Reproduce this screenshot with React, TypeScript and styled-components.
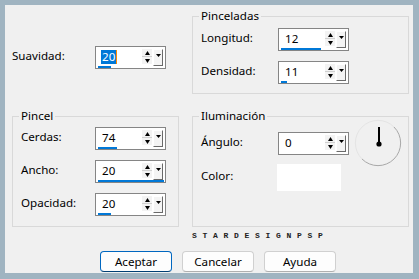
import React from 'react';
import styled, { createGlobalStyle, css } from 'styled-components';

const GlobalStyle = createGlobalStyle`
    html, body {
        margin: 0;
        padding: 0;
        background: #a0b4c1;
    }
    body {
        font-family: "Noto Sans", "Liberation Sans", sans-serif;
        font-size: 11.6px;
        color: #000;
    }
`;

const Frame = styled.div`
    width: 419px;
    height: 279px;
    box-sizing: border-box;
    padding: 5px 6px 6px 5px;
    background: #a0b4c1;
`;

const Dialog = styled.div`
    width: 408px;
    height: 268px;
    box-sizing: border-box;
    padding: 4px 0 0 7px;
    background: #f0f0f0;
    display: flex;
    flex-direction: column;
`;

const Groups = styled.div`
    display: grid;
    grid-template-columns: 167px 217px;
    grid-template-rows: 85px 118px;
    column-gap: 13px;
    row-gap: 15px;
`;

const Loose = styled.div`
    padding-top: 37px;
`;

const Group = styled.fieldset<{ $tight?: boolean }>`
    margin: 0;
    min-width: 0;
    height: 100%;
    box-sizing: border-box;
    padding: 0 ${p => (p.$tight ? 4 : 8)}px 0 8px;
    border: 1px solid #d9d9d9;
`;

const Legend = styled.legend`
    padding: 0 2px;
    margin-left: -2px;
    font-size: 11.6px;
    line-height: 14px;
`;

const Rows = styled.div<{ $top: number; $gap: number }>`
    display: flex;
    flex-direction: column;
    gap: ${p => p.$gap}px;
    padding-top: ${p => p.$top}px;
`;

const Row = styled.div`
    display: flex;
    align-items: center;
`;

const Label = styled.span<{ $w: number }>`
    width: ${p => p.$w}px;
    flex: none;
    line-height: 14px;
    margin-top: -3px;
`;

const Spin = styled.div`
    width: 71px;
    height: 23px;
    box-sizing: border-box;
    border: 1px solid #858585;
    background: #fff;
    padding: 1px 2px 1px 1px;
    display: flex;
    flex-direction: column;
`;

const SpinTop = styled.div`
    display: flex;
    height: 18px;
`;

const Value = styled.div`
    flex: 1;
    padding-left: 4px;
    display: flex;
    align-items: center;
`;

const ValueText = styled.span<{ $selected?: boolean }>`
    line-height: 14px;
    padding: 0 1px;
    ${p =>
        p.$selected &&
        css`
            background: #0078d7;
            color: #fff;
            border-right: 1px solid #ff8a00;
        `}
`;

const Arrows = styled.div`
    width: 10px;
    height: 15px;
    margin-top: 1px;
    display: flex;
    flex-direction: column;
    background: #f3f3f3;
`;

const ArrowHalf = styled.div<{ $down?: boolean }>`
    flex: 1;
    display: flex;
    align-items: center;
    justify-content: center;
    border-top: ${p => (p.$down ? '1px solid #d0d0d0' : 'none')};
`;

const Drop = styled.div`
    width: 10px;
    height: 17px;
    margin-top: 1px;
    margin-left: 1px;
    box-sizing: border-box;
    background: #f4f4f4;
    border-top: 1px solid #fff;
    border-left: 1px solid #fff;
    border-right: 1px solid #6a6a6a;
    border-bottom: 1px solid #6a6a6a;
    display: flex;
    justify-content: center;
    padding-top: 4px;
`;

const Track = styled.div`
    height: 2px;
    margin-left: 1px;
`;

const Fill = styled.div`
    height: 2px;
    background: #0078d7;
`;

const Swatch = styled.div`
    width: 64px;
    height: 27px;
    background: #fff;
`;

const LightBody = styled.div`
    display: flex;
    justify-content: space-between;
`;

const Dial = styled.svg`
    width: 50px;
    height: 50px;
    margin-top: -4px;
`;

const Mark = styled.div`
    margin: 5px 0 0 180px;
    font-family: "Liberation Mono", monospace;
    font-weight: bold;
    font-size: 8px;
    line-height: 8px;
    letter-spacing: 5.7px;
    color: #222;
`;

const Buttons = styled.div`
    display: flex;
    gap: 10px;
    margin: 11px 0 0 88px;
`;

const Button = styled.button<{ $primary?: boolean }>`
    width: 72px;
    height: 21px;
    box-sizing: border-box;
    padding: 0;
    font-family: inherit;
    font-size: 11.6px;
    color: #000;
    background: #fdfdfd;
    border-radius: 4px;
    border: 1px solid ${p => (p.$primary ? '#0067c0' : '#d0d0d0')};
    border-bottom-color: ${p => (p.$primary ? '#003e73' : '#b0b0b0')};
`;

const Tri = ({ down }: { down?: boolean }) => (
    <svg width="5" height="4" viewBox="0 0 5 4">
        <path d={down ? 'M0 0H5L2.5 4Z' : 'M0 4H5L2.5 0Z'} fill="#000" />
    </svg>
);

const Spinner = ({ value, fill, selected }: { value: string; fill: number; selected?: boolean }) => (
    <Spin>
        <SpinTop>
            <Value>
                <ValueText $selected={selected}>{value}</ValueText>
            </Value>
            <Arrows>
                <ArrowHalf><Tri /></ArrowHalf>
                <ArrowHalf $down><Tri down /></ArrowHalf>
            </Arrows>
            <Drop>
                <svg width="5" height="3" viewBox="0 0 5 3">
                    <path d="M0 0H5L2.5 3Z" fill="#000" />
                </svg>
            </Drop>
        </SpinTop>
        <Track>
            <Fill style={{ width: `${Math.round(fill * 66)}px` }} />
        </Track>
    </Spin>
);

const App = () => (
    <>
        <GlobalStyle />
        <Frame>
            <Dialog>
                <Groups>
                    <Loose>
                        <Row>
                            <Label $w={83}>Suavidad:</Label>
                            <Spinner value="20" fill={0.2} selected />
                        </Row>
                    </Loose>
                    <Group>
                        <Legend>Pinceladas</Legend>
                        <Rows $top={5} $gap={10}>
                            <Row>
                                <Label $w={77}>Longitud:</Label>
                                <Spinner value="12" fill={0.6} />
                            </Row>
                            <Row>
                                <Label $w={77}>Densidad:</Label>
                                <Spinner value="11" fill={0.09} />
                            </Row>
                        </Rows>
                    </Group>
                    <Group>
                        <Legend>Pincel</Legend>
                        <Rows $top={4} $gap={10}>
                            <Row>
                                <Label $w={74}>Cerdas:</Label>
                                <Spinner value="74" fill={0.29} />
                            </Row>
                            <Row>
                                <Label $w={74}>Ancho:</Label>
                                <Spinner value="20" fill={1} />
                            </Row>
                            <Row>
                                <Label $w={74}>Opacidad:</Label>
                                <Spinner value="20" fill={0.2} />
                            </Row>
                        </Rows>
                    </Group>
                    <Group $tight>
                        <Legend>Iluminación</Legend>
                        <LightBody>
                            <Rows $top={9} $gap={9}>
                                <Row>
                                    <Label $w={77}>Ángulo:</Label>
                                    <Spinner value="0" fill={0} />
                                </Row>
                                <Row>
                                    <Label $w={76}>Color:</Label>
                                    <Swatch />
                                </Row>
                            </Rows>
                            <Dial viewBox="0 0 50 50">
                                <path d="M8 40A22.5 22.5 0 0 1 40 8" fill="none" stroke="#e4e4e4" strokeWidth="1" />
                                <path d="M40 8A22.5 22.5 0 0 1 8 40" fill="none" stroke="#a8a8a8" strokeWidth="1" />
                                <line x1="25" y1="8" x2="25" y2="25" stroke="#000" strokeWidth="2" />
                                <circle cx="25" cy="25" r="2.6" fill="#000" />
                            </Dial>
                        </LightBody>
                    </Group>
                </Groups>
                <Mark>STARDESIGNPSP</Mark>
                <Buttons>
                    <Button $primary>Aceptar</Button>
                    <Button>Cancelar</Button>
                    <Button>Ayuda</Button>
                </Buttons>
            </Dialog>
        </Frame>
    </>
);

export default App;
